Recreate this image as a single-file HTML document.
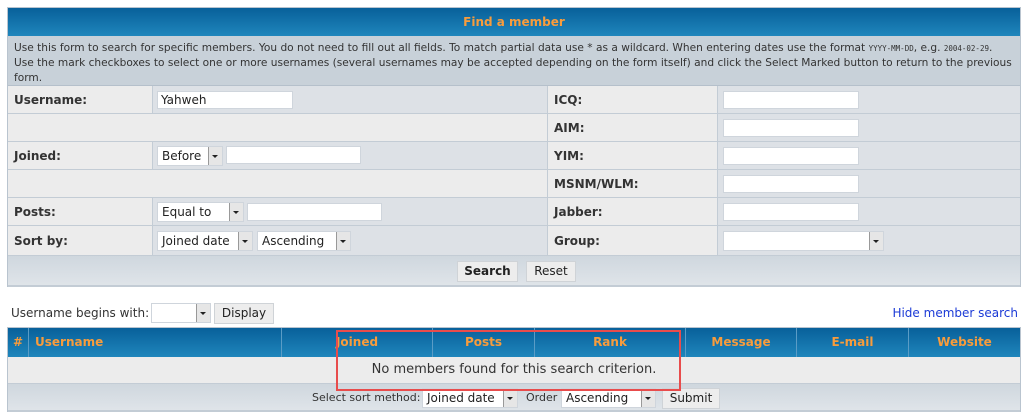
<!DOCTYPE html>
<html><head><style>
body{margin:0;width:1024px;height:415px;background:#fff;font-family:"DejaVu Sans",Verdana,sans-serif;font-size:12px;color:#333;position:relative;overflow:hidden}
div{position:absolute;box-sizing:border-box}
.hd{background:linear-gradient(#08609a,#1f86bc);color:#f89c3c;font-weight:bold;font-size:12px}
.l{background:#ececec;border-right:1px solid #c3ccd5;border-bottom:1px solid #c3ccd5;font-weight:bold;padding-left:6px;line-height:28px}
.v{background:#dde1e6;border-bottom:1px solid #c3ccd5;border-right:1px solid #c3ccd5}
.e{background:#ececec;border-bottom:1px solid #c3ccd5}
.in{background:#fff;border:1px solid #cfd5dc;height:18px;font-size:12px;line-height:16px;padding-left:3px;color:#222}
.sel{background:#fff;border:1px solid #cfd5dc;height:20px;line-height:18px;padding-left:4px;color:#222}
.ar{position:absolute;right:0;top:0;width:13px;height:18px;background:#e6e6e6;border-left:1px solid #999}
.ar:after{content:"";position:absolute;left:3px;top:8px;border-left:3px solid transparent;border-right:3px solid transparent;border-top:3px solid #222}
.btn{background:#ededed;border:1px solid #cfd3d7;height:21px;line-height:19px;text-align:center;color:#222}
.bar{background:linear-gradient(#cfd7de,#dfe4e9);border-bottom:2px solid #c3ccd5}
.th{line-height:29px;text-align:center;border-right:1px solid #5a9cc6}
</style></head><body>
<div style="left:7px;top:7px;width:1014px;height:280px;border:1px solid #b9c4cf;background:#dde1e6"></div>
<div class="hd" style="left:8px;top:8px;width:1012px;height:28px;text-align:center;line-height:28px">Find a member</div>
<div style="left:8px;top:36px;width:1012px;height:50px;background:#c8d1d9;padding:5px 0 0 6px;line-height:15px;font-size:10.6px;color:#333;border-bottom:1px solid #b5c0cb;white-space:nowrap;overflow:hidden">Use this form to search for specific members. You do not need to fill out all fields. To match partial data use * as a wildcard. When entering dates use the format <span style="font-family:'DejaVu Sans Mono';font-size:7.5px">YYYY-MM-DD</span>, e.g. <span style="font-family:'DejaVu Sans Mono';font-size:7.5px">2004-02-29</span>.<br>Use the mark checkboxes to select one or more usernames (several usernames may be accepted depending on the form itself) and click the Select Marked button to return to the previous<br>form.</div>

<div class="l" style="left:8px;top:86px;width:145px;height:28px">Username:</div>
<div class="v" style="left:153px;top:86px;width:395px;height:28px"></div>
<div class="in" style="left:157px;top:91px;width:136px">Yahweh</div>
<div class="e" style="left:8px;top:114px;width:540px;height:28px;border-right:1px solid #c3ccd5"></div>
<div class="l" style="left:8px;top:142px;width:145px;height:28px">Joined:</div>
<div class="v" style="left:153px;top:142px;width:395px;height:28px"></div>
<div class="sel" style="left:157px;top:146px;width:66px">Before<span class="ar"></span></div>
<div class="in" style="left:226px;top:146px;width:135px"></div>
<div class="e" style="left:8px;top:170px;width:540px;height:28px;border-right:1px solid #c3ccd5"></div>
<div class="l" style="left:8px;top:198px;width:145px;height:28px">Posts:</div>
<div class="v" style="left:153px;top:198px;width:395px;height:28px"></div>
<div class="sel" style="left:157px;top:202px;width:87px">Equal to<span class="ar"></span></div>
<div class="in" style="left:247px;top:203px;width:135px"></div>
<div class="l" style="left:8px;top:226px;width:145px;height:30px;line-height:30px">Sort by:</div>
<div class="v" style="left:153px;top:226px;width:395px;height:30px"></div>
<div class="sel" style="left:157px;top:231px;width:96px">Joined date<span class="ar"></span></div>
<div class="sel" style="left:257px;top:231px;width:94px">Ascending<span class="ar"></span></div>

<div class="l" style="left:548px;top:86px;width:170px;height:28px">ICQ:</div>
<div class="l" style="left:548px;top:114px;width:170px;height:28px">AIM:</div>
<div class="l" style="left:548px;top:142px;width:170px;height:28px">YIM:</div>
<div class="l" style="left:548px;top:170px;width:170px;height:28px">MSNM/WLM:</div>
<div class="l" style="left:548px;top:198px;width:170px;height:28px">Jabber:</div>
<div class="l" style="left:548px;top:226px;width:170px;height:30px;line-height:30px">Group:</div>
<div class="v" style="left:718px;top:86px;width:302px;height:28px;border-right:0"></div>
<div class="v" style="left:718px;top:114px;width:302px;height:28px;border-right:0"></div>
<div class="v" style="left:718px;top:142px;width:302px;height:28px;border-right:0"></div>
<div class="v" style="left:718px;top:170px;width:302px;height:28px;border-right:0"></div>
<div class="v" style="left:718px;top:198px;width:302px;height:28px;border-right:0"></div>
<div class="v" style="left:718px;top:226px;width:302px;height:30px;border-right:0"></div>
<div class="in" style="left:723px;top:91px;width:136px"></div>
<div class="in" style="left:723px;top:119px;width:136px"></div>
<div class="in" style="left:723px;top:147px;width:136px"></div>
<div class="in" style="left:723px;top:175px;width:136px"></div>
<div class="in" style="left:723px;top:203px;width:136px"></div>
<div class="sel" style="left:723px;top:231px;width:161px"><span class="ar"></span></div>

<div class="bar" style="left:8px;top:256px;width:1012px;height:31px"></div>
<div class="btn" style="left:457px;top:261px;width:61px;font-weight:bold">Search</div>
<div class="btn" style="left:526px;top:261px;width:50px">Reset</div>

<div style="left:11px;top:305px;line-height:16px">Username begins with:</div>
<div class="sel" style="left:151px;top:303px;width:60px"><span class="ar"></span></div>
<div class="btn" style="left:214px;top:303px;width:60px">Display</div>
<div style="right:6px;top:305px;line-height:16px;color:#1b3ad6">Hide member search</div>

<div style="left:7px;top:327px;width:1014px;height:85px;border:1px solid #b9c4cf;background:#ececec"></div>
<div class="hd" style="left:8px;top:328px;width:1012px;height:29px"></div>
<div class="hd th" style="left:8px;top:328px;width:21px;background:none">#</div>
<div class="hd th" style="left:29px;top:328px;width:253px;background:none;text-align:left;padding-left:6px">Username</div>
<div class="hd th" style="left:282px;top:328px;width:151px;background:none">Joined</div>
<div class="hd th" style="left:433px;top:328px;width:102px;background:none">Posts</div>
<div class="hd th" style="left:535px;top:328px;width:151px;background:none">Rank</div>
<div class="hd th" style="left:686px;top:328px;width:111px;background:none">Message</div>
<div class="hd th" style="left:797px;top:328px;width:112px;background:none">E-mail</div>
<div class="hd th" style="left:909px;top:328px;width:111px;background:none;border-right:0">Website</div>
<div style="left:8px;top:357px;width:1012px;height:27px;line-height:26px;text-align:center;font-size:13px;border-bottom:1px solid #c3ccd5">No members found for this search criterion.</div>
<div class="bar" style="left:8px;top:384px;width:1012px;height:28px"></div>
<div style="left:312px;top:390px;line-height:16px;font-size:11px">Select sort method:</div>
<div class="sel" style="left:422px;top:388px;width:96px">Joined date<span class="ar"></span></div>
<div style="left:526px;top:390px;line-height:16px;font-size:11px">Order</div>
<div class="sel" style="left:561px;top:388px;width:95px">Ascending<span class="ar"></span></div>
<div class="btn" style="left:662px;top:388px;width:58px">Submit</div>

<div style="left:336px;top:330px;width:345px;height:61px;border:2px solid #e84c4c"></div>
</body></html>
